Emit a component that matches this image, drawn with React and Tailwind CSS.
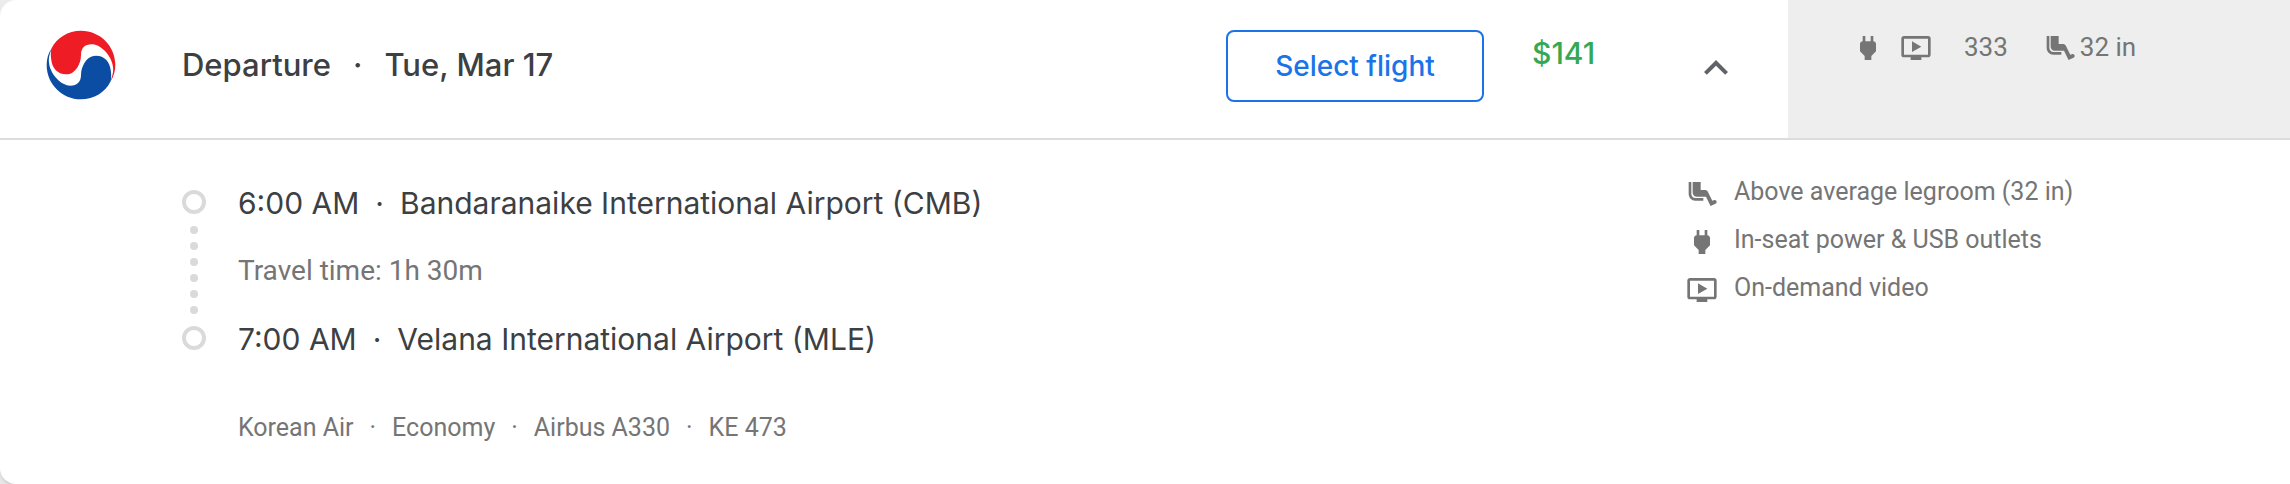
import { useState } from "react"
import {
  MdAirlineSeatLegroomExtra,
  MdKeyboardArrowDown,
  MdKeyboardArrowUp,
  MdOndemandVideo,
  MdPower
} from "react-icons/md"

const flight = {
  date: "Tue, Mar 17",
  price: "$141",
  depart: { time: "6:00 AM", airport: "Bandaranaike International Airport (CMB)" },
  arrive: { time: "7:00 AM", airport: "Velana International Airport (MLE)" },
  travelTime: "1h 30m",
  details: ["Korean Air", "Economy", "Airbus A330", "KE 473"],
  layout: "333",
  legroom: "32 in"
}

const amenities = [
  { icon: MdAirlineSeatLegroomExtra, label: "Above average legroom (32 in)" },
  { icon: MdPower, label: "In-seat power & USB outlets" },
  { icon: MdOndemandVideo, label: "On-demand video" }
]

export default function App() {
  const [open, setOpen] = useState(true)

  return (
    <div className="bg-[#ececec] font-[Roboto,sans-serif] text-[#3c4043]">
      <article className="bg-white rounded-l-2xl shadow-md overflow-hidden">
        <header className="flex border-b-2 border-[#dadce0] min-h-[140px]">
          <div className="flex flex-1 items-start pt-[30px] pr-12 pl-[46px] font-[Inter,sans-serif]">
            <div className="flex flex-1 items-center gap-[66px] h-[70px]">
              <AirlineLogo />
              <h2 className="flex gap-[22px] text-[31px] font-medium leading-10 whitespace-nowrap">
                <span>Departure</span>
                <span>·</span>
                <span>{flight.date}</span>
              </h2>
            </div>
            <button
              type="button"
              className="w-[258px] h-[72px] mr-12 rounded-lg border-2 border-[#1a73e8] text-[28px] font-medium text-[#1a73e8] cursor-pointer"
            >
              Select flight
            </button>
            <p className="w-40 text-[30px] font-medium leading-[46px] text-[#34a853]">{flight.price}</p>
            <button
              type="button"
              aria-label="Flight details"
              aria-expanded={open}
              onClick={() => setOpen(!open)}
              className="mt-[14px] text-5xl text-[#5f6368] cursor-pointer"
            >
              {open ? <MdKeyboardArrowUp /> : <MdKeyboardArrowDown />}
            </button>
          </div>

          {/* Seat summary */}
          <aside className="flex items-start w-[502px] pt-8 pl-16 bg-[#eee] text-[26px] leading-[30px] text-[#757575]">
            <MdPower className="size-8" />
            <MdOndemandVideo className="size-8 ml-4" />
            <span className="ml-8">{flight.layout}</span>
            <MdAirlineSeatLegroomExtra className="size-8 ml-9" />
            <span className="ml-1">{flight.legroom}</span>
          </aside>
        </header>

        {open && (
          <div className="flex">
            <div className="flex flex-1 gap-8 pt-[43px] pb-[38px] pl-[182px]">
              <Timeline />
              <div>
                <Stop stop={flight.depart} />
                <p className="my-[30px] text-[28px] leading-9 text-[#757575]">Travel time: {flight.travelTime}</p>
                <Stop stop={flight.arrive} />
                <ul className="flex gap-4 mt-[51px] text-[25px] leading-9 text-[#757575]">
                  {flight.details.map((item, i) => (
                    <li key={item} className="flex gap-4">
                      {i > 0 && <span>·</span>}
                      {item}
                    </li>
                  ))}
                </ul>
              </div>
            </div>

            <ul className="flex flex-col gap-4 w-[604px] pt-[38px] text-[25px] leading-7 text-[#757575]">
              {amenities.map(({ icon: Icon, label }) => (
                <li key={label} className="flex items-start gap-4">
                  <Icon className="size-8" />
                  {label}
                </li>
              ))}
            </ul>
          </div>
        )}
      </article>
    </div>
  )
}

function Stop({ stop }) {
  return (
    <p className="flex gap-4 font-[Inter,sans-serif] text-[30px] leading-10 whitespace-nowrap">
      <span>{stop.time}</span>
      <span>·</span>
      <span>{stop.airport}</span>
    </p>
  )
}

function Timeline() {
  return (
    <div className="flex flex-col items-center gap-3 pt-[7px]">
      <span className="size-6 rounded-full border-4 border-[#dadada]" />
      <div className="flex flex-col gap-2">
        {[0, 1, 2, 3, 4, 5].map(n => (
          <span key={n} className="size-2 rounded-full bg-[#dadada]" />
        ))}
      </div>
      <span className="size-6 rounded-full border-4 border-[#dadada]" />
    </div>
  )
}

// Both halves share one outline, the blue one is turned by 180 degrees
function AirlineLogo() {
  const half =
    "M66 85C82 52 116 31 155 31C212 31 258 77 258 134C258 152 253 170 243 184C250 166 254 150 250 134C244 104 214 72 187 72C166 72 155 84 155 104C155 111 154 118 152 124C143 150 128 162 110 162C84 162 69 143 66 120C64 107 64 95 66 85Z"
  return (
    <svg viewBox="50 29 210 210" className="size-[70px]" role="img" aria-label="Korean Air">
      <path d={half} fill="#ee1c25" />
      <path d={half} fill="#0b4da2" transform="rotate(180 155 134)" />
    </svg>
  )
}
